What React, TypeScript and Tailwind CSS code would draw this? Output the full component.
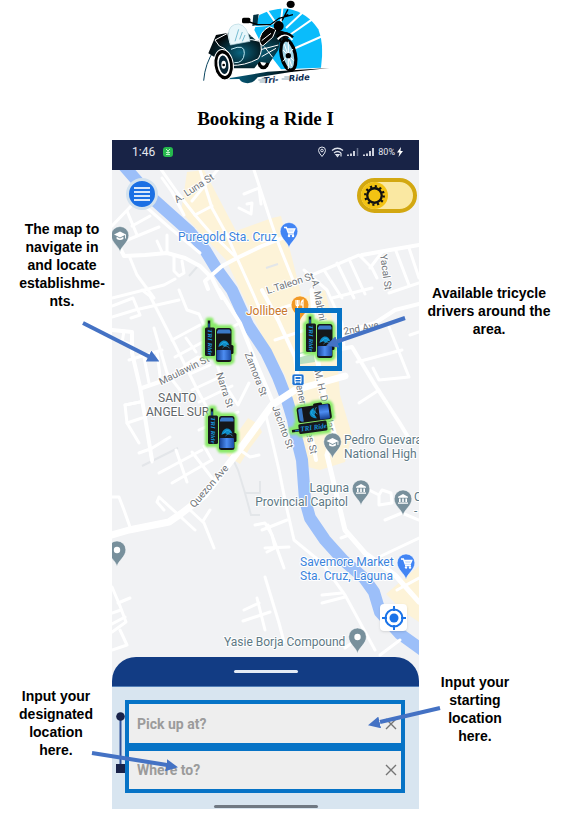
import React from "react";

type Road = [points: string, width?: number];

const ROADS: Road[] = [
  ["162,178 172,192 184,215"],
  ["145,206 170,228 200,253"],
  ["160,168 177,192 195,215 208,230 237,258 255,298 262,315"],
  ["200,170 212,208 227,235 237,258"],
  ["219,168 192,201"],
  ["195,215 212,206"],
  ["254,170 272,225 279,245 295,285"],
  ["290,235 262,246 237,258 222,266 205,281 208,289", 4],
  ["239,208 251,214 252,203 247,204"],
  ["244,194 259,188 261,204"],
  ["112,226 132,205"],
  ["125,241 159,227"],
  ["127,211 137,235"],
  ["132,226 150,216"],
  ["120,248 124,256 145,255 167,253 185,258 200,266 212,278 222,298", 4],
  ["130,258 137,275 154,298"],
  ["174,256 174,271 179,276 184,273 182,261"],
  ["112,298 164,285 175,279"],
  ["157,241 162,252"],
  ["167,235 167,253"],
  ["112,317 135,310 179,300"],
  ["112,306 133,298 140,315 131,318"],
  ["142,290 150,296 175,345 199,393 217,426"],
  ["179,290 187,310 199,314 206,330"],
  ["219,290 240,323 255,360 274,405", 4],
  ["240,323 212,337 175,357"],
  ["200,325 172,340"],
  ["186,338 196,352"],
  ["154,328 167,373 180,390"],
  ["112,330 132,332 132,353 140,387 152,460", 4],
  ["112,338 130,344"],
  ["124,331 122,343"],
  ["129,360 162,350"],
  ["142,388 165,380 205,355 217,343", 4],
  ["144,357 149,383"],
  ["157,352 160,376"],
  ["125,405 140,402"],
  ["140,402 125,405 127,423 139,443"],
  ["127,423 142,418"],
  ["149,450 170,437"],
  ["192,390 222,376"],
  ["199,402 232,386"],
  ["185,365 198,357"],
  ["190,374 210,365"],
  ["214,355 222,380 238,405 249,383"],
  ["199,430 225,418 238,412"],
  ["345,376 320,383 295,390 272,405 237,453 205,495 182,513 169,522 129,530 112,535", 7],
  ["159,473 202,450"],
  ["172,483 212,460"],
  ["192,452 212,478"],
  ["176,450 187,482"],
  ["204,446 212,460"],
  ["164,510 157,502 159,497 195,530"],
  ["190,510 204,523 214,548"],
  ["203,521 210,510"],
  ["112,497 119,497 124,510 130,527"],
  ["112,587 120,606 126,622 112,632"],
  ["118,603 130,598"],
  ["112,613 121,610"],
  ["112,624 125,617"],
  ["120,630 127,645 112,650"],
  ["139,453 150,449 152,462"],
  ["240,450 250,457 259,455"],
  ["255,525 265,523 272,535 275,548 267,552"],
  ["265,577 279,623 284,642"],
  ["244,610 259,603"],
  ["243,621 270,612"],
  ["257,598 265,630"],
  ["262,530 287,520"],
  ["268,525 275,543 284,568"],
  ["265,548 289,547"],
  ["265,412 272,440 279,470 286,505 294,540 322,563 345,595 375,650"],
  ["322,595 342,593"],
  ["322,603 345,597"],
  ["369,490 379,495 379,505 392,503 391,493 382,490 379,495"],
  ["385,520 402,513 419,520"],
  ["379,557 419,538"],
  ["341,538 349,535"],
  ["262,241 272,238"],
  ["262,290 278,320 295,357 299,390 309,423 316,460", 4],
  ["312,275 359,255 372,268 377,278"],
  ["324,270 342,298"],
  ["337,263 354,298"],
  ["349,259 365,294"],
  ["332,298 372,288"],
  ["362,255 390,250 419,245", 4],
  ["382,252 370,268"],
  ["396,251 409,285"],
  ["409,248 419,278"],
  ["389,293 419,283"],
  ["304,270 327,290 342,323 344,347"],
  ["342,333 375,323 395,310 419,304", 4],
  ["335,350 352,347 375,385 399,422 410,440", 4],
  ["357,362 402,350"],
  ["389,327 409,377 379,380 373,368"],
  ["359,403 379,390"],
  ["410,335 419,332"],
  ["275,340 320,325"],
  ["276,310 300,302"],
  ["295,357 338,345"],
  ["309,423 334,415"],
  ["312,290 317,357 325,400 334,433 327,455 345,530 365,553 395,575 419,602", 5],
  ["397,590 419,578"],
  ["345,648 356,640"],
  ["380,655 400,640"],
];

const STREETS: { t: string; x: number; y: number; r: number }[] = [
  { t: "A. Luna St", x: 194, y: 188, r: -33 },
  { t: "L.Taleon St", x: 290, y: 283, r: -18 },
  { t: "A. Mabini St", x: 320, y: 306, r: 79 },
  { t: "Yacal St", x: 386, y: 272, r: 82 },
  { t: "2nd Ave", x: 361, y: 328, r: -11 },
  { t: "Maulawin St", x: 184, y: 370, r: -26 },
  { t: "Narra St", x: 225, y: 390, r: 72 },
  { t: "Zamora St", x: 256, y: 374, r: 69 },
  { t: "Jacinto St", x: 283, y: 427, r: 70 },
  { t: "General Taines St", x: 306, y: 416, r: 78 },
  { t: "M. H. Del Pilar St", x: 326, y: 406, r: 77 },
  { t: "Quezon Ave", x: 209, y: 486, r: -49 },
];

const HALO = { paintOrder: "stroke", stroke: "#fff", strokeWidth: 2, strokeLinejoin: "round" } as const;

function Cart() {
  return (
    <g fill="none" stroke="#fff" strokeWidth="1.3">
      <path d="M-5 -4h2.4l1.8 5h5l1.6-3.6h-7.6" fill="#fff" fillOpacity="0.8" />
      <path d="M-1 2.6h6" />
      <circle cx="0" cy="4.4" r="0.6" />
      <circle cx="4" cy="4.4" r="0.6" />
    </g>
  );
}

function Pin({ x, y, color, children }: { x: number; y: number; color: string; children: React.ReactNode }) {
  return (
    <g transform={`translate(${x} ${y})`}>
      <path
        d="M0 16.5C-1.2 10.5-8.8 7-8.8 -0.2A8.8 8.8 0 1 1 8.8 -0.2C8.8 7 1.2 10.5 0 16.5Z"
        fill={color}
        stroke="#fff"
        strokeOpacity="0.6"
        strokeWidth="0.8"
      />
      {children}
    </g>
  );
}

function School() {
  return (
    <g fill="#fff">
      <path d="M-6 -1L0 -4 6 -1 0 2Z" />
      <path d="M-3.4 1.2V3.6Q0 5.6 3.4 3.6V1.2L0 3Z" />
      <path d="M5 -1h.9v4H5z" />
    </g>
  );
}

function Bank() {
  return (
    <g fill="#fff">
      <path d="M-5 -2.2L0 -5 5 -2.2V-1.2H-5Z" />
      <path d="M-4 -.6h1.6V3H-4zM-.8 -.6H.8V3H-.8zM2.4 -.6H4V3H2.4zM-5 3.4H5V4.8H-5z" />
    </g>
  );
}

function Tricycle({ x, y, r = 0 }: { x: number; y: number; r?: number }) {
  const shape = "M-10.5 -21H-7.500V-15.500H-3.500V-12.500L0 -13.500H12L13.500 -10V4H15V12H13.500V20L11 21.500H-1L-2.500 19V15.500H-14V-12.500L-10.500 -15.500Z";
  return (
    <g transform={`translate(${x} ${y}) rotate(${r})`}>
      <path d={shape} fill="#8bea6b" stroke="#8bea6b" strokeWidth="5" strokeLinejoin="round" filter="url(#glow)" />
      <path d="M-9.500 -20.500V-13" stroke="#101418" strokeWidth="2.500" />
      <path d="M-9.500 -17.500V-13" stroke="#1e68b5" strokeWidth="1.400" />
      <rect x="-13.500" y="-13.500" width="10" height="28.500" rx="1.500" fill="#17191c" />
      <text
        transform="translate(-11 -12) rotate(90)"
        fontSize="7"
        className="fill-[#1695dc] font-bold italic font-['Liberation_Serif']"
      >
        TRI Ride
      </text>
      <rect x="11" y="4" width="4" height="9" rx="1.500" fill="#111" />
      <rect x="-2.500" y="-13" width="15.500" height="34" rx="2.500" fill="#15171a" />
      <path d="M-1.500 -9.500L0 -11.500H11L12 -9.500V-7.500H-1.500Z" fill="#3a79c8" />
      <path d="M0 6C1 -2 9 -3 11 5 8 2 8 7 5 5 3 3 2 5 0 6Z" fill="#0d8bc6" />
      <path d="M2 5Q5 -1 9 3M4 7Q7 3 11 7" stroke="#35b9ef" strokeWidth="0.600" fill="none" />
      <rect x="-2" y="9" width="14.500" height="10" rx="1" fill="url(#hood)" />
    </g>
  );
}

function MapDrawing() {
  return (
    <svg viewBox="112 170 307 520" className="block w-full" role="img" aria-label="Map of Santa Cruz, Laguna">
      <defs>
        <filter id="glow" x="-30%" y="-30%" width="160%" height="160%">
          <feGaussianBlur stdDeviation="1.300" />
        </filter>
        <linearGradient id="hood" x1="0" y1="0" x2="1" y2="0">
          <stop offset="0" stopColor="#153f92" />
          <stop offset="0.5" stopColor="#4d8df2" />
          <stop offset="1" stopColor="#1c4ca6" />
        </linearGradient>
      </defs>
      <rect x="112" y="170" width="307" height="520" fill="#f1f2f4" />
      <g fill="#fdf3d8">
        <path d="M187 172L204 170 236 231 272 218 281 216 290 250 302 298 325 290 335 330 340 395 352 435 345 462 320 470 308 467 300 440 292 400 285 375 262 335 245 300 226 260 205 238 181 212Z" />
        <path d="M386 594L419 566V622L404 612Z" />
        <path d="M236 435L248 418 258 424 262 432 250 448 240 464 226 455Z" />
      </g>
      <path d="M293 354l20 -4 2 12 -20 3z" fill="#b9dfc0" />
      <path d="M124 166L152 198 190 232 205 250 216 268 232 290 248 325 266 352 278 377 287 400 293 420 297 440 302 460 305 500 310 518 325 540 343 560 364 578 374 592 380 612 400 634 425 652" fill="none" stroke="#9cbff9" strokeWidth="12" strokeLinejoin="round" />
      <g fill="none" stroke="#e3e6e9" strokeWidth="2">
        <path d="M231 455L238 470 245 493 251 515H260M245 493H260V481M142 466L178 448M189 276l8-9M266 268l12-4" />
      </g>
      <g fill="none" stroke="#fff" strokeLinecap="round" strokeLinejoin="round">
        {ROADS.map(([points, width = 3]) => (
          <polyline key={points} points={points} strokeWidth={width} />
        ))}
      </g>

      <g fontSize="10" className="fill-[#6f7479] font-['Roboto',sans-serif]" textAnchor="middle">
        {STREETS.map((s) => (
          <text key={s.t} transform={`translate(${s.x} ${s.y}) rotate(${s.r})`} dominantBaseline="central" {...HALO}>
            {s.t}
          </text>
        ))}
      </g>

      <Pin x={120} y={235.5} color="#78909c"><School /></Pin>
      <Pin x={289} y={231.500} color="#4285f4"><Cart /></Pin>
      <Pin x={300} y={305} color="#f29a26">
        <path d="M-4 -5V-1Q-4 1 -2.500 1V5M-2.500 -5V1M-1 -5V-1Q-1 1 -2.500 1M3 5V-5Q1 -4 1 0H3" stroke="#fff" strokeWidth="1.200" fill="none" />
      </Pin>
      <Pin x={332.500} y={442} color="#78909c"><School /></Pin>
      <Pin x={361} y={489} color="#78909c"><Bank /></Pin>
      <Pin x={403} y={499} color="#78909c"><Bank /></Pin>
      <Pin x={406} y={563} color="#4285f4"><Cart /></Pin>
      <Pin x={357.500} y={637} color="#78909c"><circle r="3.200" fill="#fff" /></Pin>
      <Pin x={117} y={550} color="#78909c"><circle r="3.200" fill="#fff" /></Pin>

      <g>
        <rect x="292" y="374" width="12" height="11.500" rx="2" fill="#1f73d2" stroke="#fff" strokeWidth="0.700" />
        <path d="M295 376.500h6v5.500h-6zM295 379.500h6M296 382l-1 1.500M300 382l1 1.500" fill="none" stroke="#fff" strokeWidth="1.100" />
      </g>

      <g fontSize="12" className="font-['Roboto',sans-serif]">
        <g className="fill-[#3b83dc]">
          <text x="178" y="241" {...HALO}>Puregold Sta. Cruz</text>
          <text x="300" y="566" {...HALO}>Savemore Market</text>
          <text x="300" y="580" {...HALO}>Sta. Cruz, Laguna</text>
        </g>
        <text x="246" y="315" className="fill-[#c9772b]" {...HALO}>Jollibee</text>
        <g className="fill-[#606569]">
          <text x="158" y="402" {...HALO}>SANTO</text>
          <text x="146" y="416" {...HALO}>ANGEL SUR</text>
        </g>
        <g className="fill-[#5d7884]">
          <text x="344" y="444" {...HALO}>Pedro Guevara</text>
          <text x="344" y="458" {...HALO}>National High</text>
          <text x="349" y="492" textAnchor="end" {...HALO}>Laguna</text>
          <text x="348" y="506" textAnchor="end" {...HALO}>Provincial Capitol</text>
          <text x="414" y="501" {...HALO}>C</text>
          <text x="414" y="515" {...HALO}>-</text>
          <text x="224" y="646" {...HALO}>Yasie Borja Compound</text>
        </g>
      </g>

      <Tricycle x={218.500} y={341} />
      <Tricycle x={221.500} y={429} />
      <Tricycle x={319.500} y={337} />
      <Tricycle x={311} y={419} r={-98} />
    </svg>
  );
}

function Logo() {
  return (
    <svg viewBox="0 0 450 270" className="w-[150px]" role="img" aria-label="Tri-Ride logo">
      <defs>
        <radialGradient id="fender" cx="0.55" cy="0.6" r="0.6">
          <stop offset="0" stopColor="#0a6580" />
          <stop offset="1" stopColor="#020608" />
        </radialGradient>
        <linearGradient id="ground" x1="0" x2="1">
          <stop offset="0" stopColor="#0a6d90" />
          <stop offset="0.45" stopColor="#022a38" />
          <stop offset="0.7" stopColor="#000" />
        </linearGradient>
      </defs>
      <path d="M190 90L205 45Q250 22 292 26 350 38 382 88 400 130 390 203L270 208 210 130Z" fill="#0abcfb" />
      <path d="M262 80L222 22M268 80L276 10M285 84L345 28M292 108L372 52M300 150L395 108" stroke="#fff" strokeWidth="6" />
      <path d="M187 45L203 42 199 75 184 78Z" fill="#06303f" />
      <path d="M38 242Q42 190 70 150" stroke="#0b4560" strokeWidth="3" fill="none" />
      <path d="M95 238L230 215 415 204 300 216 200 232Q185 252 165 249 150 247 145 237Z" fill="url(#ground)" />
      <ellipse cx="217" cy="178" rx="20" ry="30" fill="#000" />
      <ellipse cx="217" cy="178" rx="10" ry="19" fill="#fff" />
      <path d="M52 160L75 105 160 90 200 125 215 105 235 82 258 88 300 102 290 118 268 120 262 150 235 190 205 185 190 205H125Z" fill="url(#fender)" />
      <path d="M205 128Q205 95 235 80L255 88 245 112 215 138Z" fill="#050505" stroke="#fff" strokeWidth="3" />
      <path d="M212 122L240 100M205 150L262 135M212 170L255 145M220 140L245 172M180 110L190 80 225 77 258 68" stroke="#fff" strokeWidth="3" fill="none" />
      <path d="M72 120L110 100 117 130Q160 110 206 124 218 150 202 176 160 198 120 196 123 150 85 138Z" fill="url(#fender)" stroke="#fff" strokeWidth="3" />
      <path d="M112 105Q113 72 143 72 170 77 177 124L118 135Z" fill="#e8f7fb" stroke="#b5d6df" strokeWidth="2" />
      <path d="M132 124L143 88M146 118L154 96M154 124L162 105" stroke="#77bdd2" strokeWidth="3" />
      <path d="M120 148Q162 130 160 160T130 188" fill="none" stroke="#c1eaf4" strokeWidth="3" />
      <ellipse cx="98" cy="194" rx="29" ry="46" transform="rotate(-8 98 194)" fill="#000" stroke="#fff" strokeWidth="3" />
      <ellipse cx="98" cy="194" rx="19" ry="34" transform="rotate(-8 98 194)" fill="#fff" />
      <ellipse cx="98" cy="194" rx="14" ry="28" transform="rotate(-8 98 194)" fill="#052333" />
      <ellipse cx="98" cy="194" rx="7" ry="12" fill="#fff" />
      <circle cx="98" cy="195" r="4" />
      <path d="M265 115L294 170M277 110L306 163" stroke="#000" strokeWidth="6" />
      <ellipse cx="292" cy="165" rx="21" ry="46" transform="rotate(-12 292 165)" fill="#a5d7e8" stroke="#000" strokeWidth="10" />
      <path d="M292 125V207M276 150L308 182M276 184L306 147M280 132L302 198" stroke="#fff" strokeWidth="3" />
      <path d="M260 118Q286 90 304 120" fill="none" stroke="#fff" strokeWidth="6" />
      <path d="M257 110Q283 88 306 112" fill="none" stroke="#000" strokeWidth="7" />
      <circle cx="292" cy="167" r="8" />
      <circle cx="263" cy="78" r="15" fill="#000" />
      <path d="M175 66L200 74H238L264 55 306 44M273 62L291 28M281 48L292 43" fill="none" stroke="#000" strokeWidth="4" />
      <ellipse cx="299" cy="13" rx="12" ry="11" />
      <rect x="153" y="53" width="25" height="17" rx="5" />
      <path d="M202 240h24M212 235h14M272 237h26M280 231h18M206 246h18" stroke="#8ba6b5" strokeWidth="3" />
      <g fontSize="25" className="fill-[#0e2c52] font-bold italic font-['DejaVu_Sans',sans-serif]">
        <text x="218" y="250" transform="rotate(-4 218 250)">Tri-</text>
        <text x="294" y="244" transform="rotate(-4 294 244)">Ride</text>
      </g>
    </svg>
  );
}

function StatusIcons() {
  return (
    <svg viewBox="0 0 58 12" className="h-3 w-[58px]" fill="none" stroke="#dfe3ec" aria-hidden="true">
      <path d="M4 10.500Q0.500 6.500 0.500 4.500A3.500 3.500 0 0 1 7.500 4.500Q7.500 6.500 4 10.500Z" />
      <circle cx="4" cy="4.500" r="1.300" />
      <path d="M14 4.500Q19.500 0 25 4.500M16 7Q19.500 4 23 7" strokeWidth="1.300" />
      <path d="M18 8.500h3l-1.500 2zM23 7v3.500" strokeWidth="1.200" />
      <path d="M30 10v-1.500M33 10V7.500M36 10V5" strokeWidth="1.800" />
      <path d="M39.500 10V2" stroke="#65708c" strokeWidth="1.500" />
      <path d="M46 10v-1.500M49 10V7.500M52 10V5M55 10V2" strokeWidth="1.800" />
    </svg>
  );
}

function Gear() {
  return (
    <svg viewBox="-14 -14 28 28" className="pointer-events-none absolute left-1 top-1 size-[27px]" aria-hidden="true">
      <circle r="14" fill="#f3c313" />
      <circle r="7.500" fill="none" stroke="#111" strokeWidth="2.400" />
      <circle r="9.500" fill="none" stroke="#111" strokeWidth="2.600" strokeDasharray="2.200 2.774" />
    </svg>
  );
}

function Field({ id, label, size }: { id: string; label: string; size: string }) {
  return (
    <div className={`flex items-center border-4 border-[#0673c6] bg-[#eeeeee] ${size}`}>
      <label htmlFor={id} className="sr-only">{label}</label>
      <input
        id={id}
        type="text"
        placeholder={label}
        className="h-full min-w-0 flex-1 bg-transparent pl-2 font-['Roboto',sans-serif] text-sm font-bold text-gray-700 outline-none placeholder:text-[#9b9b9b]"
      />
      <button type="button" aria-label={`Clear ${label}`} className="flex size-5 items-center justify-center">
        <svg viewBox="0 0 12 12" className="size-3" stroke="#757575" strokeWidth="1.400">
          <path d="M1 1L11 11M11 1L1 11" />
        </svg>
      </button>
    </div>
  );
}

function Phone() {
  return (
    <section aria-label="Booking screen" className="flex flex-col font-normal">
      <div className="flex h-[30px] items-center bg-[#182346] pb-1.5 pl-5 pr-4 font-['Roboto',sans-serif] text-[#e4e7ef]">
        <span className="text-xs">1:46</span>
        <svg viewBox="0 0 10 10" className="ml-2 size-2.5" aria-hidden="true">
          <rect width="10" height="10" rx="3" fill="#26b94d" />
          <path d="M3 2l2 2 2-2M3 5.500h4M3 7.500h4M5 4v3.500" stroke="#bdf2c8" fill="none" />
        </svg>
        <span className="ml-auto flex items-center gap-0.5">
          <StatusIcons />
          <span className="text-[9px]">80%</span>
          <svg viewBox="0 0 6 10" className="h-2.5 w-1.5" fill="#fff" aria-hidden="true">
            <path d="M4 0L0 5.500h2.500L1.500 10 6 4H3.500Z" />
          </svg>
        </span>
      </div>

      <div className="relative">
        <MapDrawing />
        <button type="button" aria-label="Menu" className="absolute left-3.5 top-2 flex size-8 items-center justify-center rounded-full border-[3px] border-[#d3e2ee] bg-[#1b70e4]">
          <svg viewBox="0 0 16 14" className="h-3.5 w-4" stroke="#d9e8fa" strokeWidth="2" aria-hidden="true">
            <path d="M0 1h16M0 5h16M0 9h16M0 13h16" />
          </svg>
        </button>
        <label className="absolute right-0.5 top-2 block h-[35px] w-[60px] rounded-full">
          <input type="checkbox" role="switch" aria-label="Light mode" className="block size-full appearance-none rounded-full border-4 border-[#d3a811] bg-[#fae8a2]" />
          <Gear />
        </label>
        <button type="button" aria-label="My location" className="absolute right-3 top-[434px] flex size-[27px] items-center justify-center rounded bg-white shadow">
          <svg viewBox="0 0 24 24" className="size-6" fill="none" stroke="#1a73e8" strokeWidth="2" aria-hidden="true">
            <circle cx="12" cy="12" r="8.500" />
            <circle cx="12" cy="12" r="4.500" fill="#1a73e8" stroke="none" />
            <path d="M12 0v5M12 19v5M0 12h5M19 12h5" />
          </svg>
        </button>
      </div>

      <div className="relative -mt-[33px]">
        <div className="flex h-[29px] justify-center rounded-t-3xl bg-[#123c84] pt-[13px]">
          <span className="h-[3px] w-16 rounded-full bg-[#e3ebf5]" />
        </div>
        <div className="border-t border-[#527eb7] bg-[#d8e5f0] pb-px pt-[13px]">
          <form className="flex">
            <svg viewBox="0 0 9 61" className="ml-1 mt-3 h-[61px] w-[9px]" aria-hidden="true">
              <path d="M4.500 4V56" stroke="#2f519b" strokeWidth="2" />
              <circle cx="4.500" cy="4.500" r="4.300" fill="#19234a" />
              <rect x="0" y="52" width="9" height="9" fill="#19234a" />
            </svg>
            <div className="mr-3.5 flex-1">
              <Field id="pickup" label="Pick up at?" size="h-[47px]" />
              <Field id="destination" label="Where to?" size="h-[46px]" />
            </div>
          </form>
          <div className="mx-auto mt-3 h-[3px] w-[104px] rounded-full bg-[#707983]" />
        </div>
      </div>
    </section>
  );
}

function Callouts() {
  return (
    <svg viewBox="0 140 563 669" className="pointer-events-none absolute inset-0 size-full" aria-hidden="true">
      <defs>
        <marker id="head" viewBox="0 0 12 12" refX="11" refY="6" markerWidth="12" markerHeight="12" markerUnits="userSpaceOnUse" orient="auto">
          <path d="M0 0L12 6 0 12Z" fill="#4472c4" />
        </marker>
      </defs>
      <rect x="297.500" y="310.500" width="42" height="58" fill="none" stroke="#0673c6" strokeWidth="5" />
      <g stroke="#4472c4" strokeWidth="4">
        <path d="M83 323L149 356.500" />
        <path d="M405 318L337 341.500" />
        <path d="M440 708L380 722" />
        <path d="M92 753L167 765" />
      </g>
      <g stroke="none" fill="none">
        <path d="M83 323L158.500 361" markerEnd="url(#head)" />
        <path d="M405 318L327 345.500" markerEnd="url(#head)" />
        <path d="M440 708L369 725" markerEnd="url(#head)" />
        <path d="M92 753L177 767" markerEnd="url(#head)" />
      </g>
    </svg>
  );
}

export default function App() {
  return (
    <main className="min-h-screen bg-white text-black">
      <header className="grid grid-cols-[minmax(0,112fr)_minmax(0,307fr)_minmax(0,144fr)]">
        <div className="col-start-2 flex h-[140px] flex-col items-center">
          <Logo />
          <h1 className="mt-[17px] font-['Liberation_Serif',serif] text-[19px] font-bold leading-6">Booking a Ride I</h1>
        </div>
      </header>
      <div className="relative grid grid-cols-[minmax(0,112fr)_minmax(0,307fr)_minmax(0,144fr)] text-center font-['Liberation_Sans',sans-serif] text-sm font-bold leading-[18px]">
        <aside className="flex flex-col justify-between pb-[50px] pt-20">
          <p className="pl-3">The map to<br />navigate in<br />and locate<br />establishme-<br />nts.</p>
          <p>Input your<br />designated<br />location<br />here.</p>
        </aside>
        <Phone />
        <aside className="flex flex-col justify-between pb-16 pt-36">
          <p className="pr-1">Available tricycle<br />drivers around the<br />area.</p>
          <p className="pr-8">Input your<br />starting<br />location<br />here.</p>
        </aside>
        <Callouts />
      </div>
    </main>
  );
}
